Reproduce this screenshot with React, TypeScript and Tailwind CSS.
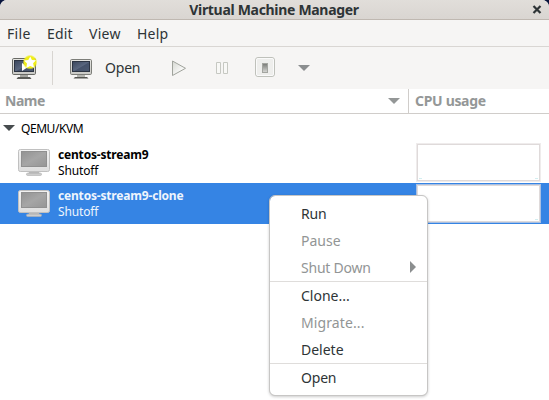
import React from "react";

function ScreenGradient() {
  return (
    <defs>
      <linearGradient id="screen" x1="0" y1="0" x2="1" y2="1">
        <stop offset="0" stopColor="#3a465c" />
        <stop offset="0.5" stopColor="#5a677f" />
        <stop offset="0.55" stopColor="#46536b" />
        <stop offset="1" stopColor="#4c5970" />
      </linearGradient>
      <radialGradient id="glow">
        <stop offset="0.75" stopColor="#f0ee18" />
        <stop offset="1" stopColor="#f0ee18" stopOpacity="0" />
      </radialGradient>
      <linearGradient id="darkcase" x1="0" y1="0" x2="0" y2="1">
        <stop offset="0" stopColor="#e6e6e2" />
        <stop offset="1" stopColor="#c9c9c5" />
      </linearGradient>
    </defs>
  );
}

function NewMachineIcon() {
  return (
    <svg width="32" height="32" viewBox="0 0 32 32" className="block shrink-0">
      <ScreenGradient />
      <rect x="4.500" y="6.500" width="23" height="16" rx="1.200" fill="url(#darkcase)" stroke="#696a65" />
      <rect x="6.500" y="8.500" width="19" height="11" fill="url(#screen)" stroke="#2d3543" />
      <path d="M12 23h8v2h-8z" fill="#a5a6a1" />
      <path d="M10 25h12l1.500 2h-15z" fill="#5b5c58" />
      <path d="M14 11l6 4-6 4z" fill="#fff" />
      <circle cx="22" cy="10.200" r="7.500" fill="url(#glow)" />
      <path d="M22.300 4.600l1.600 3.400 4.100.3-2.900 3 1 4.400-3.900-1.800-3.900 2 .7-4.300-2.900-3.100 4.200-.5z" fill="#fff" />
    </svg>
  );
}

function ConsoleIcon() {
  return (
    <svg width="32" height="32" viewBox="0 0 32 32" className="block shrink-0">
      <rect x="6.500" y="7.500" width="21" height="15" rx="1.200" fill="url(#darkcase)" stroke="#7d7e79" />
      <rect x="8.500" y="9.500" width="17" height="10" fill="url(#screen)" stroke="#2d3543" />
      <path d="M13 23h8v2h-8z" fill="#b4b5b0" />
      <path d="M11 25h12l1.500 1.500h-15z" fill="#555652" />
    </svg>
  );
}

function GrayMonitor() {
  return (
    <svg width="32" height="28" viewBox="0 0 32 28" className="block shrink-0">
      <defs>
        <linearGradient id="graycase" x1="0" y1="0" x2="0" y2="1">
          <stop offset="0" stopColor="#f2f2f2" />
          <stop offset="1" stopColor="#dedede" />
        </linearGradient>
        <linearGradient id="grayscreen" x1="0" y1="0" x2="1" y2="1">
          <stop offset="0" stopColor="#929292" />
          <stop offset="0.500" stopColor="#a6a6a6" />
          <stop offset="1" stopColor="#959595" />
        </linearGradient>
      </defs>
      <rect x="0.500" y="0.500" width="31" height="22" rx="1.800" fill="url(#graycase)" stroke="#c0c0c0" />
      <rect x="3.500" y="2.500" width="25" height="15" fill="url(#grayscreen)" stroke="#909090" />
      <path d="M11 23h10l1 2H10z" fill="#b9b9b9" />
      <rect x="8.500" y="24.200" width="15" height="2.200" rx="1" fill="#d0d0d0" stroke="#b0b0b0" strokeWidth="0.700" />
    </svg>
  );
}

function DownArrow({ color }: { color: string }) {
  return (
    <svg width="12" height="6" viewBox="0 0 12 6" className="block shrink-0">
      <path d="M0 0h12L6 6z" fill={color} />
    </svg>
  );
}

function CpuGraph({ selected = false }: { selected?: boolean }) {
  return (
    <div className={`mr-2 h-[39px] w-[125px] border bg-white ${selected ? "border-[#a9c0e2]" : "border-[#efecec]"}`}>
      <div className="flex h-full w-full items-end justify-between border border-[#dfdada] px-px pb-px">
        <span className="h-px w-[3px] bg-[#d3eef0]" />
        <span className="h-px w-[3px] bg-[#d3eef0]" />
      </div>
    </div>
  );
}

function MachineRow({ name, selected = false }: { name: string; selected?: boolean }) {
  return (
    <div className={`flex h-[41px] pt-px ${selected ? "bg-[#3584e4] text-[#eef5fd]" : "text-black"}`}>
      <div className="pt-[6px] pl-[18px]">
        <GrayMonitor />
      </div>
      <div className="flex-1 pt-[4px] pl-2 text-[12px] leading-4">
        <div className="w-max font-bold tracking-[-0.180px]">{name}</div>
        <div className="w-max tracking-[-0.150px]">Shutoff</div>
      </div>
      <CpuGraph selected={selected} />
    </div>
  );
}

function MenuItem({ label, disabled = false, submenu = false, spacing = "" }: { label: string; disabled?: boolean; submenu?: boolean; spacing?: string }) {
  return (
    <div className={`flex h-[27px] items-center justify-between pr-[11px] pl-[31px] ${disabled ? "text-[#929595]" : "text-[#2e3436]"}`}>
      <span className={`w-max whitespace-nowrap ${spacing}`}>{label}</span>
      {submenu && (
        <svg width="6" height="12" viewBox="0 0 6 12" className="-mt-px">
          <path d="M0 0l6 6-6 6z" fill="#8b8e8f" />
        </svg>
      )}
    </div>
  );
}

export default function App() {
  return (
    <div className="relative h-[400px] w-[549px] overflow-hidden bg-[#08143c] font-['Noto_Sans',sans-serif] text-[14px] text-[#2e3436]">
      <div className="h-full overflow-hidden rounded-t-[7px] bg-white">
        <header className="relative flex h-5 items-center justify-center border-b border-[#bfb8b1] bg-linear-to-b from-[#e1deda] to-[#d9d5d1]">
          <h1 className="mr-px text-[14px] leading-[19px] font-bold tracking-[-0.310px]">Virtual Machine Manager</h1>
          <svg width="10" height="9" viewBox="0 0 10 9" className="absolute top-[5px] right-[7px]">
            <path d="M1.500 1l7 7m0-7l-7 7" stroke="#2e3436" strokeWidth="2.200" />
          </svg>
        </header>

        <nav className="flex h-[27px] items-center border-b border-[#d9d6d3] bg-[#f6f5f4] pl-[7px]">
          <span className="w-10 tracking-[0.300px]">File</span>
          <span className="w-[42px] tracking-[0.200px]">Edit</span>
          <span className="w-12 tracking-[0.300px]">View</span>
          <span className="tracking-[0.200px]">Help</span>
        </nav>

        <div className="flex h-[42px] items-start bg-[#f6f5f4] pt-[5px]">
          <div className="ml-2"><NewMachineIcon /></div>
          <div className="-mt-px ml-3 h-[34px] w-px bg-[#d8d5d1]" />
          <div className="ml-[11px]"><ConsoleIcon /></div>
          <span className="ml-[9px] w-16 pt-[5px] leading-[21px] tracking-[-0.200px]">Open</span>
          <svg width="120" height="24" viewBox="0 0 120 24" className="mt-1 block">
            <defs>
              <linearGradient id="play" x1="0" y1="0" x2="1" y2="1">
                <stop offset="0" stopColor="#d5d7d1" />
                <stop offset="0.700" stopColor="#fafaf9" />
              </linearGradient>
              <linearGradient id="switch" x1="0" y1="0" x2="0" y2="1">
                <stop offset="0" stopColor="#777975" />
                <stop offset="1" stopColor="#d9dad7" />
              </linearGradient>
            </defs>
            <path d="M3.500 5l13 7.300-13 7.200z" fill="url(#play)" stroke="#a0a39c" />
            <path d="M47.500 6.500h4v11h-4zM54.500 6.500h4v11h-4z" fill="#f8f8f6" stroke="#c6c8c2" />
            <rect x="86.500" y="1.500" width="19" height="19" rx="2.500" fill="#eeeeec" stroke="#bfc1bb" />
            <rect x="87.500" y="2.500" width="17" height="17" rx="1.500" fill="none" stroke="#fafafa" />
            <rect x="93.500" y="7.500" width="5" height="9" fill="url(#switch)" stroke="#a3a5a0" />
          </svg>
          <div className="mt-[13px] ml-[9px]"><DownArrow color="#8b8e8f" /></div>
        </div>

        <div className="flex h-[25px] border-b border-[#d0cdca] bg-white font-bold text-[#949797]">
          <div className="flex w-[409px] items-center justify-between border-r border-[#d0cdca] pr-2 pl-[5px]">
            <span className="pb-[2px] tracking-[-0.450px]">Name</span>
            <DownArrow color="#949797" />
          </div>
          <span className="ml-[6px] leading-[23px] tracking-[-0.320px]">CPU usage</span>
        </div>

        <main>
          <div className="flex h-7 items-center pl-[3px] text-[12px] text-black">
            <DownArrow color="#474c4e" />
            <span className="ml-[6px] pt-px tracking-[-0.450px]">QEMU/KVM</span>
          </div>
          <MachineRow name="centos-stream9" />
          <MachineRow name="centos-stream9-clone" selected />
        </main>
      </div>

      <div className="absolute top-[195px] left-[269px] h-[201px] w-[159px] rounded-[6px] border border-[#c7c6c5] bg-white bg-clip-padding pt-[4px] shadow-[0_1px_3px_rgba(0,0,0,0.200)]">
        <MenuItem label="Run" spacing="tracking-[-0.200px]" />
        <MenuItem label="Pause" disabled />
        <MenuItem label="Shut Down" disabled submenu spacing="tracking-[-0.220px]" />
        <div className="h-px bg-[#dfdddb]" />
        <MenuItem label="Clone..." />
        <MenuItem label="Migrate..." disabled spacing="tracking-[0.100px]" />
        <MenuItem label="Delete" />
        <div className="h-px bg-[#dfdddb]" />
        <MenuItem label="Open" spacing="tracking-[-0.200px]" />
      </div>
    </div>
  );
}
